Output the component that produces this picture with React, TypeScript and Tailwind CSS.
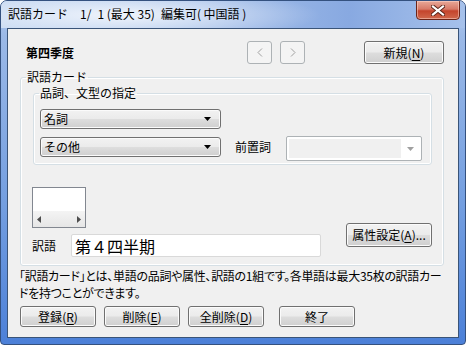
import type { ReactNode } from "react";
import clsx from "clsx";

const BTN =
  "flex items-center rounded-[3px] border border-[#707070] bg-[linear-gradient(180deg,#f2f2f2_0%,#ebebeb_48%,#dddddd_52%,#cfcfcf_100%)] shadow-[inset_0_0_0_1px_#fbfbfb] text-[12px] leading-none text-black";

function Button({ children, className }: { children: ReactNode; className?: string }) {
  return <div className={clsx(BTN, "justify-center", className)}>{children}</div>;
}

function Key({ k }: { k: string }) {
  return (
    <>
      (<span className="underline underline-offset-2">{k}</span>)
    </>
  );
}

function Arrow({ color = "#000" }: { color?: string }) {
  return (
    <svg width="7" height="4" viewBox="0 0 7 4">
      <path d="M0 0h7L3.5 4z" fill={color} />
    </svg>
  );
}

function Combo({ label }: { label: string }) {
  return (
    <div className={clsx(BTN, "h-[20px] w-[181px] justify-between pr-[9px] pl-[3px]")}>
      <span>{label}</span>
      <Arrow />
    </div>
  );
}

function NavButton({ dir }: { dir: "left" | "right" }) {
  return (
    <div className="flex h-[23px] w-[25px] items-center justify-center rounded-[3px] border border-[#adb2b5] bg-[#f4f4f4]">
      <svg width="6" height="9" viewBox="0 0 6 9">
        <path
          d={dir === "left" ? "M5 0.5L1 4.5L5 8.5" : "M1 0.5L5 4.5L1 8.5"}
          fill="none"
          stroke="#a0a0a0"
          strokeWidth="1"
        />
      </svg>
    </div>
  );
}

export default function App() {
  return (
    <div className="h-[345px] w-[466px] bg-white font-['Noto_Sans_CJK_JP','Noto_Sans',sans-serif]">
      <div className="flex h-[345px] w-[466px] flex-col overflow-hidden rounded-t-[7px] rounded-b-[4px] border border-[#34517f] bg-[linear-gradient(180deg,#b4caee_0%,#9bb9e7_10%,#739ee0_60%,#4c80d8_100%)]">
        {/* title bar */}
        <div className="flex h-[27px] shrink-0 items-start justify-between bg-[radial-gradient(ellipse_200px_26px_at_120px_14px,rgba(255,255,255,0.8),transparent),linear-gradient(90deg,#c3d6f1_0%,#a9c3eb_40%,#88a9e1_75%,#a6c1eb_100%)]">
          <span className="mt-[5px] ml-[7px] whitespace-pre text-[12px] leading-[16px] text-black">
            訳語カード　1/{"\u2002"}1 (最大 35){"\u2002"}編集可( 中国語 )
          </span>
          <div className="mr-[5px] mt-[-1px] flex h-[20px] w-[44px] items-center justify-center rounded-b-[4px] border border-[#6b2418] bg-[linear-gradient(180deg,#e8a898_0%,#d77a68_45%,#c4442c_55%,#d0684c_100%)] shadow-[inset_0_0_0_1px_rgba(255,220,210,0.5)]">
            <svg width="14" height="11" viewBox="0 0 14 11">
              <path d="M2 1.5L12 9.5M12 1.5L2 9.5" stroke="#5a2418" strokeWidth="4" strokeLinecap="square" />
              <path d="M2 1.5L12 9.5M12 1.5L2 9.5" stroke="#ffffff" strokeWidth="2.2" strokeLinecap="square" />
            </svg>
          </div>
        </div>

        {/* client area */}
        <div className="mx-[6px] flex h-[310px] flex-col border border-[#3a5478] bg-[#f0f0f0] px-[12px] text-[12px] text-black">
          <div className="mt-[12px] flex h-[23px] items-center">
            <span className="ml-[6px] flex-1 font-bold">第四季度</span>
            <NavButton dir="left" />
            <div className="ml-[8px]">
              <NavButton dir="right" />
            </div>
            <Button className="mr-[2px] ml-[59px] h-[23px] w-[80px]">
              新規<Key k="N" />
            </Button>
          </div>

          <fieldset className="mt-[6px] mr-[2px] rounded-[3px] border border-[#d5dfe5] pr-[11px] pb-[8px] pl-[12px] shadow-[inset_0_0_0_1px_#ffffff]">
            <legend className="ml-[-7px] px-[1px] text-[12px] leading-[14px]">訳語カード</legend>
            <fieldset className="mt-[2px] rounded-[3px] border border-[#d5dfe5] pr-[7px] pb-[3px] pl-[6px] shadow-[inset_0_0_0_1px_#ffffff]">
              <legend className="ml-[-1px] px-[1px] text-[12px] leading-[14px]">品詞、文型の指定</legend>
              <div className="mt-[9px]">
                <Combo label="名詞" />
              </div>
              <div className="mt-[7px] flex items-start">
                <div className="mt-[1px]">
                  <Combo label="その他" />
                </div>
                <span className="mt-[1px] ml-[14px] w-[51px] leading-[20px]">前置詞</span>
                <div className="flex h-[25px] w-[136px] items-stretch rounded-[2px] border border-[#adb2b5] bg-white p-[2px]">
                  <div className="flex-1 bg-[#f0f0f0]" />
                  <div className="flex w-[18px] items-center justify-center">
                    <Arrow color="#a0a0a0" />
                  </div>
                </div>
              </div>
            </fieldset>

            <div className="flex items-end justify-between">
              <div className="ml-[-1px] flex flex-col">
                <div className="mt-[22px] flex h-[41px] w-[54px] flex-col border border-[#828790] bg-white">
                  <div className="flex-1" />
                  <div className="flex h-[16px] items-center justify-between bg-[linear-gradient(180deg,#f4f4f4,#e6e6e6)] px-[4px]">
                    <svg width="4" height="7" viewBox="0 0 4 7">
                      <path d="M4 0v7L0 3.5z" fill="#4d4d4d" />
                    </svg>
                    <svg width="4" height="7" viewBox="0 0 4 7">
                      <path d="M0 0v7L4 3.5z" fill="#4d4d4d" />
                    </svg>
                  </div>
                </div>
                <div className="mt-[6px] flex items-center">
                  <span className="w-[39px]">訳語</span>
                  <div className="flex h-[23px] w-[250px] items-center rounded-[2px] border border-[#d9d9d9] bg-white px-[3px] text-[16px] leading-none">
                    第４四半期
                  </div>
                </div>
              </div>
              <Button className="mb-[10px] h-[24px] w-[86px]">
                属性設定<Key k="A" />...
              </Button>
            </div>
          </fieldset>

          <p className="mt-[1px] ml-[-1px] leading-[17px] tracking-[-0.3px] whitespace-nowrap [font-feature-settings:'palt']">
            「訳語カード」とは、単語の品詞や属性、訳語の1組です。各単語は最大35枚の訳語カー
            <br />
            ドを持つことができます。
          </p>

          <div className="mt-[5px] flex">
            <Button className="h-[21px] w-[76px]">
              登録<Key k="R" />
            </Button>
            <Button className="ml-[8px] h-[21px] w-[76px]">
              削除<Key k="E" />
            </Button>
            <Button className="ml-[8px] h-[21px] w-[76px]">
              全削除<Key k="D" />
            </Button>
            <Button className="ml-[15px] h-[21px] w-[76px]">終了</Button>
          </div>
        </div>
      </div>
    </div>
  );
}
